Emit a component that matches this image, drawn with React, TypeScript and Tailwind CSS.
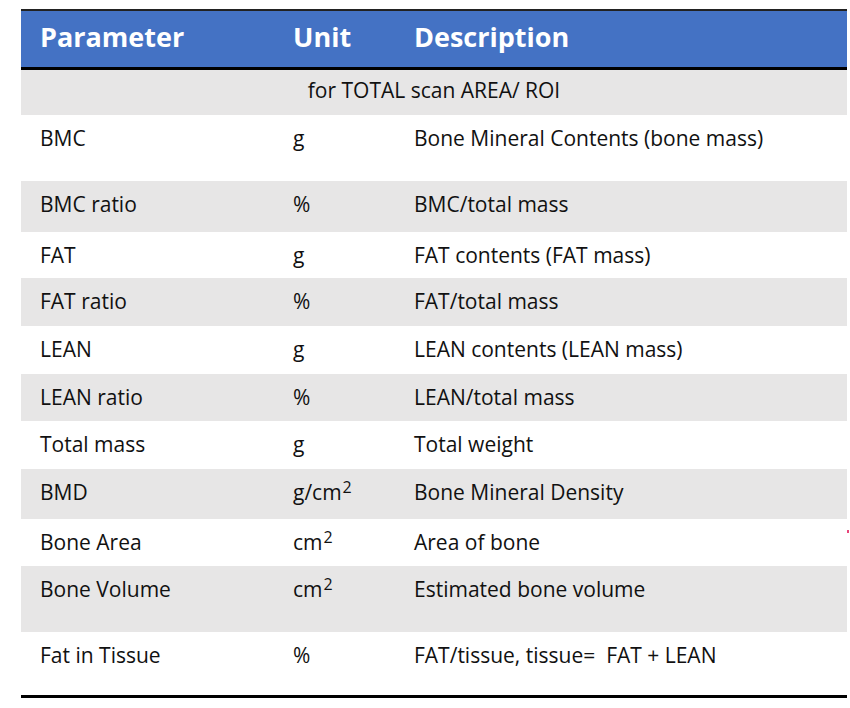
const sup = <sup className="text-[16px] relative -top-[7px] ml-[1px]">2</sup>;

const rows: { p: string; u: React.ReactNode; d: string; h: string; gray: boolean }[] = [
  { p: "BMC", u: "g", d: "Bone Mineral Contents (bone mass)", h: "h-[66px]", gray: false },
  { p: "BMC ratio", u: "%", d: "BMC/total mass", h: "h-[51px]", gray: true },
  { p: "FAT", u: "g", d: "FAT contents (FAT mass)", h: "h-[46px]", gray: false },
  { p: "FAT ratio", u: "%", d: "FAT/total mass", h: "h-[48px]", gray: true },
  { p: "LEAN", u: "g", d: "LEAN contents (LEAN mass)", h: "h-[48px]", gray: false },
  { p: "LEAN ratio", u: "%", d: "LEAN/total mass", h: "h-[47px]", gray: true },
  { p: "Total mass", u: "g", d: "Total weight", h: "h-[48px]", gray: false },
  { p: "BMD", u: <>g/cm{sup}</>, d: "Bone Mineral Density", h: "h-[50px]", gray: true },
  { p: "Bone Area", u: <>cm{sup}</>, d: "Area of bone", h: "h-[47px]", gray: false },
  { p: "Bone Volume", u: <>cm{sup}</>, d: "Estimated bone volume", h: "h-[66px]", gray: true },
  { p: "Fat in Tissue", u: "%", d: "FAT/tissue, tissue=  FAT + LEAN", h: "h-[63px]", gray: false },
];

export default function App() {
  return (
    <div
      className="relative w-[850px] h-[708px] bg-white pt-[9px] pl-[21px] text-[#111]"
      style={{ fontFamily: '"Open Sans", "Noto Sans", sans-serif' }}
    >
      <div className="w-[826px] border-t-2 border-[#222]">
        {/* header */}
        <div className="grid grid-cols-[253px_121px_1fr] h-[56px] bg-[#4472c4] text-white font-bold text-[27px] items-center border-b-[3px] border-black box-content">
          <div className="pl-[19px] -mt-[4px]">Parameter</div>
          <div className="pl-[19px] -mt-[4px]">Unit</div>
          <div className="pl-[19px] -mt-[4px]">Description</div>
        </div>

        <div className="h-[45px] bg-[#e7e6e6] flex items-center justify-center text-[21px] pb-[3px]">
          for TOTAL scan AREA/ ROI
        </div>

        {rows.map((r) => (
          <div
            key={r.p}
            className={`grid grid-cols-[253px_121px_1fr] ${r.h} ${r.gray ? "bg-[#e7e6e6]" : "bg-white"} text-[21px] leading-[28px] pt-[9px]`}
          >
            <div className="pl-[19px]">{r.p}</div>
            <div className="pl-[19px]">{r.u}</div>
            <div className="pl-[19px] whitespace-pre">{r.d}</div>
          </div>
        ))}

        <div className="h-[3px] bg-black" />
      </div>
      <span className="absolute left-[847px] top-[530px] w-[2px] h-[3px] bg-[#e8457a]" />
    </div>
  );
}
